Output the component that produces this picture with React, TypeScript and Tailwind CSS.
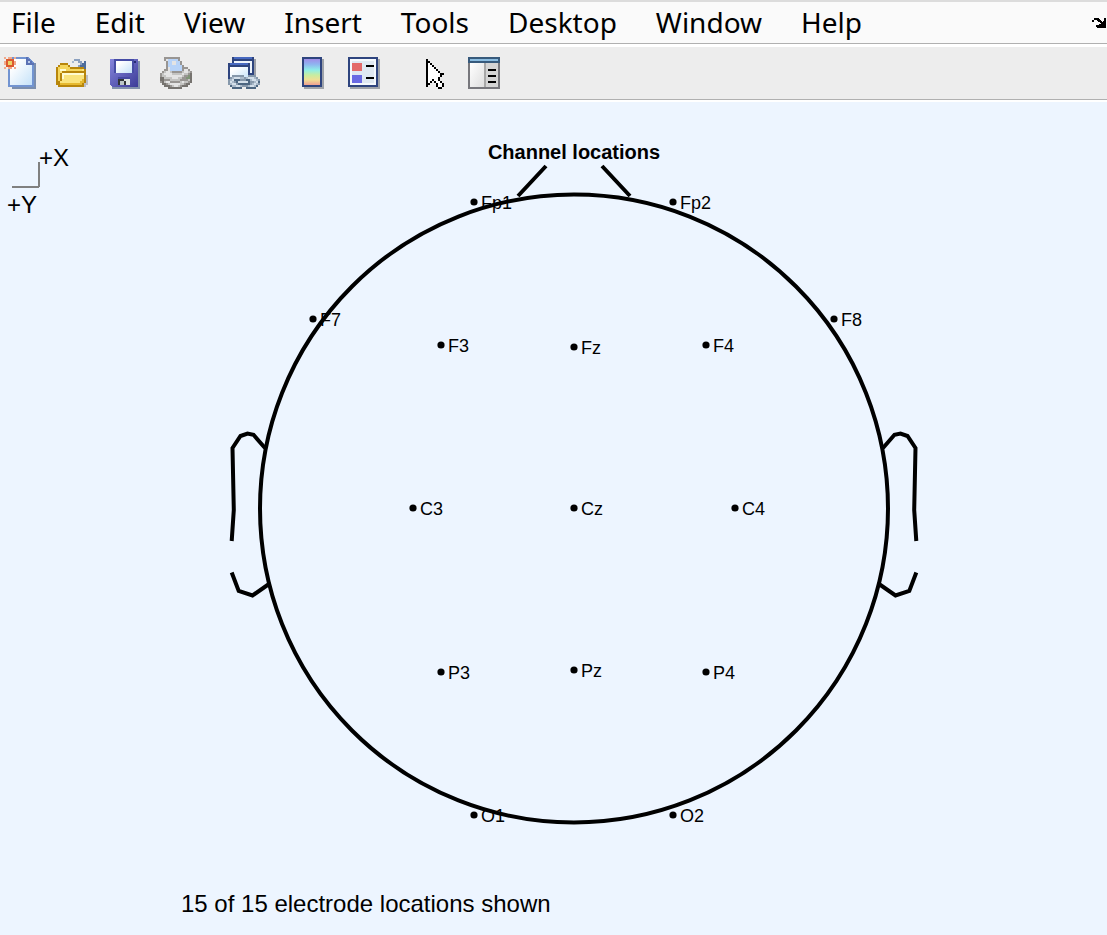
import type { ReactNode } from "react";

const menus = ["File", "Edit", "View", "Insert", "Tools", "Desktop", "Window", "Help"];

type Palette = Record<string, string>;

/** Draws one unit square for every character that the palette names. */
function Pixels({ rows, palette }: { rows: string[]; palette: Palette }) {
  return (
    <>
      {rows.flatMap((row, y) =>
        row.split("").map((c, x) =>
          palette[c] ? <rect key={`${x}-${y}`} x={x} y={y} width="1" height="1" fill={palette[c]} /> : null,
        ),
      )}
    </>
  );
}

const folderRows = [
  "................",
  ".........bbb....",
  "........a..bb.c.",
  "..dddd......bcc.",
  ".dyyyyd....bccc.",
  "dyyyyyydddddddc.",
  "dywwwyyyyyyyyYd.",
  "dyYdddddddddddd.",
  "dydwwwwwwwwwwwd.",
  "dydwYYYYYYYYYYds",
  "dydwYYYYYYYYYYds",
  "dydYYYYYYYYYYgds",
  "ddYYYYYYYYYYggds",
  "ddgggggggggggdss",
  ".ddddddddddddds.",
  "................",
];
const folderPalette: Palette = {
  a: "#a9b9cf", b: "#8ba0bf", c: "#4e6d9b", d: "#b8860b",
  y: "#f5d65c", Y: "#fae47d", w: "#fffbd0", g: "#e6b92f", s: "#bcbec4",
};

const printerRows = [
  "..gggggggg......",
  "..gwbbbbbg......",
  "...gbbwwbbg.....",
  "...gbbwwbbg.....",
  "...gbbbbbbbg....",
  "...gwbbbbbbggg..",
  "..ggwbbbbbbgwwg.",
  ".glwwlggggglwwlg",
  "glwwwwlllllwllgd",
  "gllwwwwwwwwlggnd",
  "ddllllwwwllggnnd",
  "ddggglllllggggld",
  "gdlwwggggglwllgd",
  ".ddglwwwwwllgdd.",
  "..dddglwwlgddd..",
  "....ddddddd.....",
];
const printerPalette: Palette = {
  b: "#b7d3f8", w: "#e4e4e4", l: "#c4c4c2", g: "#989592", d: "#76736f", n: "#7f9476",
};

const chainRows = [
  "..gggggg..gggg..",
  ".glwwwllglwwwlg.",
  "glwnnngggnnlwwlg",
  "gwlgnwwwwwngglwn",
  "glwwgnnnnnnglwlg",
  ".nllwwlggglwwln.",
  "..nnnnn..nnnnn..",
];
const chainPalette: Palette = { g: "#8698ab", l: "#aabaca", w: "#d3dfea", n: "#4c6681" };

const arrowRows = [
  "k.........",
  "kk........",
  "kwk.......",
  "kwwk......",
  "kwwwk.....",
  "kwwwwk....",
  "kwwwwwk...",
  "kwwwwwwkk.",
  "kwwwwwwk..",
  "kwwwwwk...",
  "kwwkwwk...",
  "kwk.kwwk..",
  "kk...kwwk.",
  "k....kwwk.",
  "......kk..",
];

const dockRows = [
  "..kkkkk.....kk",
  "..kkkkkk....kk",
  "kk...kkkk...kk",
  "kk....kkkk.kkk",
  "........kkkkkk",
  ".........kkkkk",
  ".......kkkkkkk",
  "....kkkkkkkkkk",
  "....kkkkkkkkkk",
  ".....kkkkkkkkk",
];

function NewIcon() {
  return (
    <>
      <path d="M4 3H16V16H4Z" fill="#7a8eae" />
      <path d="M2 0H12L15 3V15H2Z" fill="#7294d1" />
      <path d="M3 1H11V4H14V14H3Z" fill="url(#pageFill)" />
      <path d="M11 0H12V1H13V2H14V3H15V4H11Z" fill="#5b72b5" />
      <path d="M12 2H13V3H12Z" fill="#bacbea" />
      <path d="M0 0H1V1H2V0H4V1H5V0H6V1H5V2H6V4H5V5H6V6H5V5H4V6H2V5H1V6H0V5H1V4H0V2H1V1H0Z" fill="#f0aa8d" />
      <path d="M1 1H5V5H1Z" fill="#dc5a30" />
      <path d="M2 2H4V4H2Z" fill="#ecd56a" />
    </>
  );
}

function SaveIcon() {
  return (
    <>
      <path d="M2 2H16V16H2Z" fill="#8292ac" />
      <path d="M1 1H15V15H2L1 14Z" fill="url(#diskFill)" />
      <path d="M3 1H13V8H3Z" fill="#454ca5" />
      <path d="M4 2H12V8H4Z" fill="url(#pageFill)" />
      <path d="M13 2H14V3H13Z" fill="#252c74" />
      <path d="M5 10H11V11H5Z" fill="#4548a2" />
      <path d="M5 11H11V14H5Z" fill="#303437" />
      <path d="M6 12H8V14H6Z" fill="#bdc8c7" />
      <path d="M8 11H11V14H9V12H8Z" fill="#dde5e1" />
    </>
  );
}

function LinkIcon() {
  return (
    <>
      <path d="M3 1H14V11H3Z" fill="#9c9fa7" />
      <path d="M2 0H13V9H2Z" fill="#2e447e" />
      <path d="M3 0H12V1H3Z" fill="#4769c0" />
      <path d="M3 2H12V8H3Z" fill="#edf3fa" />
      <path d="M0 3H11V12H0Z" fill="#2e447e" />
      <path d="M1 3H10V4H1Z" fill="#4769c0" />
      <path d="M1 5H10V11H1Z" fill="url(#pageFill)" />
      <g transform="translate(0 9)">
        <Pixels rows={chainRows} palette={chainPalette} />
      </g>
    </>
  );
}

function ColorbarIcon() {
  return (
    <>
      <path d="M4 1H14V16H4Z" fill="#9fa3a9" />
      <path d="M3 0H13V15H3Z" fill="#2e447e" />
      <path d="M4 1H12V14H4Z" fill="url(#rainbow)" />
    </>
  );
}

function LegendIcon() {
  return (
    <>
      <path d="M1 1H16V16H1Z" fill="#9fa3a9" />
      <path d="M0 0H15V15H0Z" fill="#2e447e" />
      <path d="M1 1H14V14H1Z" fill="#f5f9fd" />
      <path d="M2 2H13V13H2Z" fill="#dfe8f2" />
      <path d="M2 3H7V7H2Z" fill="#e36a6a" />
      <path d="M2 9H7V13H2Z" fill="#6a6ae3" />
      <path d="M9 4H13V5H9ZM9 10H13V11H9Z" fill="#000" />
    </>
  );
}

function InspectorIcon() {
  return (
    <>
      <path d="M0 0H16V16H0Z" fill="#77777c" />
      <path d="M0 0H16V3H0Z" fill="#375a7c" />
      <path d="M1 1H15V2H1Z" fill="#8abce0" />
      <path d="M1 3H8V15H1Z" fill="url(#panelFill)" />
      <path d="M8 3H9V15H8Z" fill="#a8a8a8" />
      <path d="M9 3H15V15H9Z" fill="#d4d4d4" />
      <path d="M10 6H14V7H10ZM10 9H14V10H10ZM10 12H14V13H10Z" fill="#000" />
    </>
  );
}

function ToolButton({ label, children }: { label: string; children: ReactNode }) {
  return (
    <button type="button" aria-label={label} className="size-8 shrink-0">
      <svg viewBox="0 0 16 16" className="size-8" shapeRendering="crispEdges" aria-hidden="true">
        {children}
      </svg>
    </button>
  );
}

function IconGradients() {
  return (
    <svg className="absolute size-0" aria-hidden="true">
      <defs>
        <linearGradient id="pageFill" x1="0" y1="0" x2="1" y2="1">
          <stop offset="0.2" stopColor="#ffffff" />
          <stop offset="1" stopColor="#c5e2f9" />
        </linearGradient>
        <linearGradient id="diskFill" x1="0" y1="0" x2="1" y2="1">
          <stop offset="0" stopColor="#8585dc" />
          <stop offset="1" stopColor="#3c3c98" />
        </linearGradient>
        <linearGradient id="panelFill" x1="0" y1="0" x2="1" y2="1">
          <stop offset="0" stopColor="#ffffff" />
          <stop offset="1" stopColor="#dedede" />
        </linearGradient>
        <linearGradient id="rainbow" x1="0" y1="0" x2="0" y2="1">
          <stop offset="0" stopColor="#a08ee8" />
          <stop offset="0.2" stopColor="#8fb4f0" />
          <stop offset="0.42" stopColor="#8eeee8" />
          <stop offset="0.62" stopColor="#c8eda0" />
          <stop offset="0.8" stopColor="#f0df94" />
          <stop offset="1" stopColor="#efa092" />
        </linearGradient>
      </defs>
    </svg>
  );
}

const electrodes: { name: string; x: number; y: number }[] = [
  { name: "Fp1", x: 474, y: 202 },
  { name: "Fp2", x: 673, y: 202 },
  { name: "F7", x: 313, y: 319 },
  { name: "F8", x: 834, y: 319 },
  { name: "F3", x: 441, y: 345 },
  { name: "Fz", x: 574, y: 347 },
  { name: "F4", x: 706, y: 345 },
  { name: "C3", x: 413, y: 508 },
  { name: "Cz", x: 574, y: 508 },
  { name: "C4", x: 735, y: 508 },
  { name: "P3", x: 441, y: 672 },
  { name: "Pz", x: 574, y: 670 },
  { name: "P4", x: 706, y: 672 },
  { name: "O1", x: 474, y: 815 },
  { name: "O2", x: 673, y: 815 },
];

function Ear() {
  return (
    <path d="M265 448L253.5 434.8L247.5 433.5L240.5 436L232.5 448L233.8 510L231.7 541M231.7 572.5L238.7 591L252.5 595.5L269 584" />
  );
}

function HeadPlot() {
  return (
    <svg
      viewBox="0 102 1107 833"
      className="block h-auto w-full font-['Liberation_Sans',Arial,sans-serif]"
      role="img"
      aria-label="Channel locations"
    >
      <path d="M12 187H39M39 162V187" stroke="#808080" strokeWidth="2" fill="none" />
      <text x="39" y="166" fontSize="24">+X</text>
      <text x="7" y="213" fontSize="24">+Y</text>
      <text x="574" y="159" fontSize="20" fontWeight="bold" textAnchor="middle">Channel locations</text>
      {electrodes.map(({ name, x, y }) => (
        <g key={name}>
          <circle cx={x} cy={y} r="3.6" />
          <text x={x + 7} y={y + 7} fontSize="18">{name}</text>
        </g>
      ))}
      <g fill="none" stroke="#000" strokeWidth="4">
        <circle cx="574" cy="508.5" r="314" />
        <path d="M546 166L518 196M602 166L630 196" />
        <Ear />
        <g transform="translate(1148 0) scale(-1 1)">
          <Ear />
        </g>
      </g>
      <text x="181" y="912" fontSize="24">15 of 15 electrode locations shown</text>
    </svg>
  );
}

export default function App() {
  return (
    <div className="min-h-screen bg-[#edf5ff] text-black">
      <IconGradients />
      <header>
        <div className="flex h-11 items-center justify-between border-t-2 border-[#dcdcdc] border-b border-b-[#b0b0b0] bg-[#fafafa]">
          <nav
            aria-label="Menu bar"
            className="flex gap-[39px] pb-0.5 pl-[11px] font-['Noto_Sans','Open_Sans',sans-serif] text-[28px] leading-9"
          >
            {menus.map((menu) => (
              <button key={menu} type="button">{menu}</button>
            ))}
          </nav>
          <button type="button" aria-label="Dock figure" className="pr-px">
            <svg viewBox="0 0 14 10" className="h-2.5 w-3.5" shapeRendering="crispEdges" aria-hidden="true">
              <Pixels rows={dockRows} palette={{ k: "#000" }} />
            </svg>
          </button>
        </div>
        <div
          role="toolbar"
          aria-label="Figure toolbar"
          className="flex h-14 items-center gap-5 border-t-3 border-b border-t-white border-b-[#b0b0b0] bg-[#ededed] pl-1"
        >
          <div className="flex gap-5">
            <ToolButton label="New figure"><NewIcon /></ToolButton>
            <ToolButton label="Open file"><Pixels rows={folderRows} palette={folderPalette} /></ToolButton>
            <ToolButton label="Save figure"><SaveIcon /></ToolButton>
            <ToolButton label="Print figure"><Pixels rows={printerRows} palette={printerPalette} /></ToolButton>
          </div>
          <div className="flex gap-5 pl-4">
            <ToolButton label="Link plot"><LinkIcon /></ToolButton>
          </div>
          <div className="flex gap-5 pl-4">
            <ToolButton label="Insert colorbar"><ColorbarIcon /></ToolButton>
            <ToolButton label="Insert legend"><LegendIcon /></ToolButton>
          </div>
          <div className="flex gap-5 pl-4">
            <ToolButton label="Edit plot">
              <g transform="translate(5 1)">
                <Pixels rows={arrowRows} palette={{ k: "#000", w: "#fff" }} />
              </g>
            </ToolButton>
            <ToolButton label="Open property inspector"><InspectorIcon /></ToolButton>
          </div>
        </div>
        <div className="h-0.5 bg-white" />
      </header>
      <main>
        <HeadPlot />
      </main>
    </div>
  );
}
